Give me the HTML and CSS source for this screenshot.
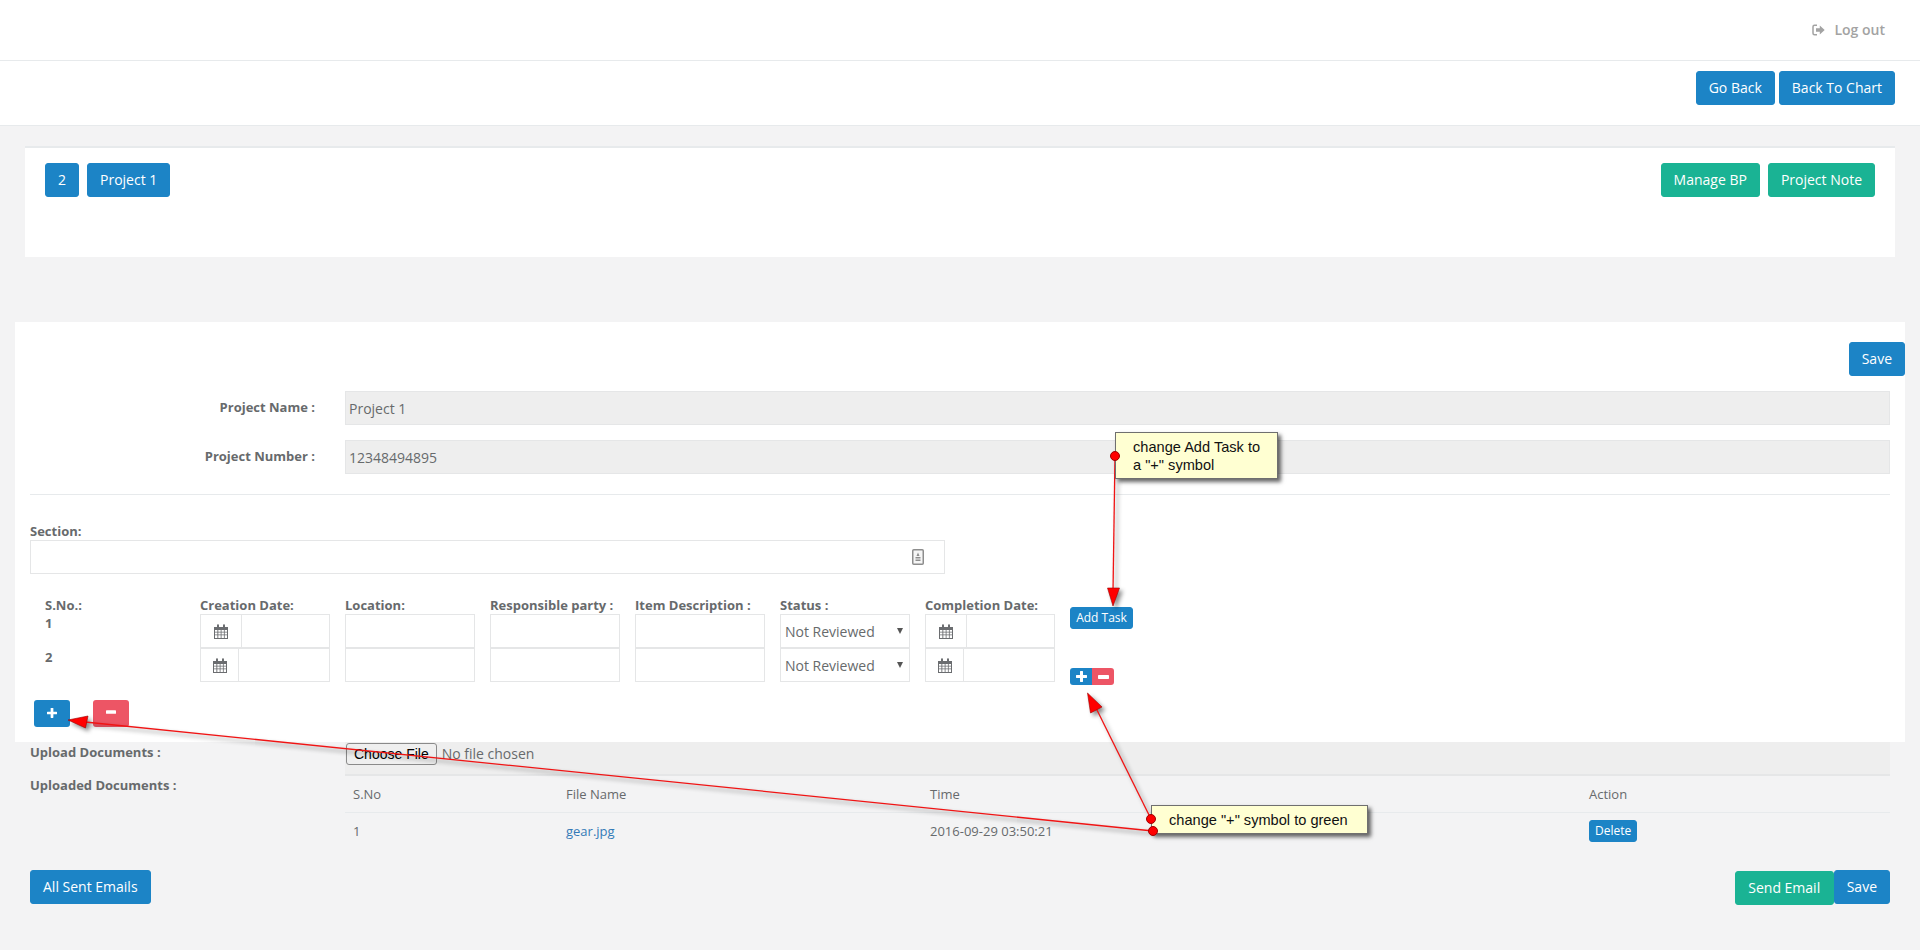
FILE: index.html
```html
<!DOCTYPE html>
<html lang="en">
<head>
<meta charset="utf-8">
<title>Project 1</title>
<link rel="stylesheet" href="styles.css">
</head>
<body>
<svg class="defs" width="0" height="0" aria-hidden="true">
  <symbol id="cal" viewBox="0 0 14 15">
    <path fill="#6b6d70" d="M0 3h3V1.500C3 .7 3.500 .3 4 .3s1 .4 1 1.200V3h4V1.500C9 .7 9.500 .3 10 .3s1 .4 1 1.200V3h3v12H0z"/>
    <path fill="#fff" d="M1 6h2.400v1.800H1zM4.300 6h2.400v1.800H4.300zM7.500 6h2.400v1.800H7.500zM10.700 6H13v1.800h-2.300zM1 8.600h2.400v1.800H1zM4.300 8.600h2.400v1.800H4.300zM7.500 8.600h2.400v1.800H7.500zM10.700 8.600H13v1.800h-2.300zM1 11.200h2.400V14H1zM4.300 11.200h2.400V14H4.300zM7.500 11.200h2.400V14H7.500zM10.700 11.200H13V14h-2.300z"/>
  </symbol>
  <symbol id="plus" viewBox="0 0 11 11"><path fill="#fff" d="M4 .5C4 .2 4.200 0 4.500 0h2c.3 0 .5.200.5.500V4h3.500c.3 0 .5.200.5.500v2c0 .3-.2.500-.5.500H7v3.500c0 .3-.2.500-.5.500h-2c-.3 0-.5-.2-.5-.5V7H.5C.2 7 0 6.800 0 6.500v-2C0 4.200.2 4 .5 4H4z"/></symbol>
  <symbol id="minus" viewBox="0 0 11 4"><rect width="11" height="4" rx=".7" fill="#fff"/></symbol>
</svg>

<header class="topbar">
  <a class="logout">
    <svg class="logout-icon" viewBox="0 0 13 12"><path d="M5 1.200H2.500C1.500 1.200 1 1.800 1 2.700v6.600c0 .9.500 1.500 1.500 1.500H5" stroke="#a3a3a3" stroke-width="1.500" fill="none"/><path fill="#a3a3a3" d="M4 4.300h3.800V1.500L12.700 6l-4.900 4.500V7.700H4z"/></svg>
    <span>Log out</span>
  </a>
</header>

<nav class="actionbar">
  <button class="btn blue">Go Back</button>
  <button class="btn blue">Back To Chart</button>
</nav>

<section class="summary">
  <div class="btn-row">
    <button class="btn blue">2</button>
    <button class="btn blue">Project 1</button>
  </div>
  <div class="btn-row">
    <button class="btn green">Manage BP</button>
    <button class="btn green">Project Note</button>
  </div>
</section>

<main class="sheet">
  <div class="panel">
    <div class="save-line"><button class="btn blue">Save</button></div>

    <div class="field">
      <label class="field-label">Project Name :</label>
      <input class="input readonly" value="Project 1" disabled>
    </div>
    <div class="field">
      <label class="field-label">Project Number :</label>
      <input class="input readonly" value="12348494895" disabled>
    </div>

    <hr class="rule">

    <label class="plain-label">Section:</label>
    <div class="section-box">
      <svg class="section-icon" viewBox="0 0 12 16"><rect x=".75" y=".75" width="10.500" height="14.500" rx="1" fill="#f6f6f6" stroke="#8d8d8d" stroke-width="1.500"/><path fill="#8d8d8d" d="M6 3.500 7.500 7h-3zM3.500 8h5v1.500h-5zM3.500 10.500h5V12h-5z"/></svg>
    </div>

    <div class="tasks">
      <div class="tlabel sno">S.No.:</div>
      <div class="tlabel">Creation Date:</div>
      <div class="tlabel">Location:</div>
      <div class="tlabel">Responsible party :</div>
      <div class="tlabel">Item Description :</div>
      <div class="tlabel">Status :</div>
      <div class="tlabel">Completion Date:</div>
      <div class="add-cell"><button class="btn blue xs">Add Task</button></div>

      <div class="tlabel sno num">1</div>
      <div class="date"><span class="addon wide"><svg class="cal"><use href="#cal"/></svg></span><input class="date-input"></div>
      <input class="cell">
      <input class="cell">
      <input class="cell">
      <div class="select-wrap"><select class="select"><option>Not Reviewed</option></select></div>
      <div class="date"><span class="addon wide"><svg class="cal"><use href="#cal"/></svg></span><input class="date-input"></div>

      <div class="tlabel sno num">2</div>
      <div class="date"><span class="addon"><svg class="cal"><use href="#cal"/></svg></span><input class="date-input"></div>
      <input class="cell">
      <input class="cell">
      <input class="cell">
      <div class="select-wrap"><select class="select"><option>Not Reviewed</option></select></div>
      <div class="date"><span class="addon"><svg class="cal"><use href="#cal"/></svg></span><input class="date-input"></div>
      <div class="mini-pair">
        <button class="mini blue"><svg class="mini-plus"><use href="#plus"/></svg></button>
        <button class="mini red"><svg class="mini-minus"><use href="#minus"/></svg></button>
      </div>
    </div>

    <div class="section-actions">
      <button class="square blue"><svg class="sq-plus"><use href="#plus"/></svg></button>
      <button class="square red"><svg class="sq-minus"><use href="#minus"/></svg></button>
    </div>
  </div>

  <div class="field upload">
    <label class="field-label left">Upload Documents :</label>
    <div class="file-box"><input class="file" type="file"></div>
  </div>

  <div class="field docs">
    <label class="field-label left">Uploaded Documents :</label>
    <table class="doc-table">
      <thead>
        <tr><th class="c1">S.No</th><th class="c2">File Name</th><th class="c3">Time</th><th>Action</th></tr>
      </thead>
      <tbody>
        <tr><td>1</td><td><a class="link">gear.jpg</a></td><td>2016-09-29 03:50:21</td><td><button class="btn blue xs">Delete</button></td></tr>
      </tbody>
    </table>
  </div>

  <div class="footer-actions">
    <button class="btn blue">All Sent Emails</button>
    <div class="footer-right">
      <button class="btn green low">Send Email</button>
      <button class="btn blue">Save</button>
    </div>
  </div>
</main>

<svg class="arrows" width="1920" height="950" viewBox="0 0 1920 950" aria-hidden="true">
  <g class="arrow">
    <path class="shaft" d="M1115 456 1113 592"/>
    <path class="head" d="M1113 606 1107.500 588 1119.500 588z"/>
    <path class="shaft" d="M1151 819 1096 708"/>
    <path class="head" d="M1087.500 693 1102 707 1090.500 713z"/>
    <path class="shaft" d="M1153 831 85 722"/>
    <path class="head" d="M68 720 88 716 85.500 728z"/>
  </g>
</svg>
<div class="note note-one">change Add Task to<br>a "+" symbol</div>
<div class="note note-two">change "+" symbol to green</div>
<svg class="arrows dots" width="1920" height="950" viewBox="0 0 1920 950" aria-hidden="true">
  <circle class="dot" cx="1115" cy="456" r="4.500"/>
  <circle class="dot" cx="1151" cy="819" r="4.500"/>
  <circle class="dot" cx="1153" cy="831" r="4.500"/>
</svg>
</body>
</html>
```

FILE: styles.css
```css
* { box-sizing: border-box; }
html, body { margin: 0; height: 950px; overflow: hidden; }
body {
  position: relative;
  background: #f3f3f4;
  color: #676a6c;
  font: 13px/20px "Open Sans", "Liberation Sans", sans-serif;
}
.defs { position: absolute; }

.topbar {
  height: 61px;
  background: #fff;
  border-bottom: 1px solid #e7eaec;
  display: flex;
  justify-content: flex-end;
  align-items: center;
  padding-right: 35px;
}
.logout { display: flex; align-items: center; color: #a3a3a3; font-weight: 600; font-size: 14px; }
.logout-icon { width: 13px; height: 12px; margin-right: 9px; }

.actionbar {
  height: 65px;
  background: #fff;
  border-bottom: 1px solid #e7eaec;
  display: flex;
  justify-content: flex-end;
  align-items: flex-start;
  gap: 4px;
  padding: 10px 25px 0 0;
}

.btn {
  height: 34px;
  padding: 0 12px;
  border: 1px solid transparent;
  border-radius: 3px;
  color: #fff;
  font: 14px/20px "Open Sans", "Liberation Sans", sans-serif;
  cursor: pointer;
}
.blue { background: #1c84c6; border-color: #1c84c6; }
.green { background: #1ab394; border-color: #1ab394; }
.red { background: #ed5565; border-color: #ed5565; }
.btn.xs { height: 22px; padding: 0 5px; font-size: 12px; line-height: 18px; }

.summary {
  margin: 20px 25px 0;
  height: 111px;
  background: #fff;
  border-top: 2px solid #e7eaec;
  padding: 15px 20px;
  display: flex;
  justify-content: space-between;
  align-items: flex-start;
}
.btn-row { display: flex; gap: 8px; }

.sheet { margin: 65px 15px 0; }
.panel { height: 420px; background: #fff; padding: 20px 15px 0 15px; }
.save-line { display: flex; justify-content: flex-end; margin-right: -15px; margin-bottom: 15px; }

.field { display: grid; grid-template-columns: 285px 1fr; column-gap: 30px; margin-bottom: 15px; }
.field-label {
  text-align: right;
  font-size: 13px;
  font-weight: 700;
  line-height: 18px;
  padding-top: 7px;
}
.field-label.left { text-align: left; padding-top: 1px; }
.input {
  height: 34px;
  width: 100%;
  border: 1px solid #e5e6e7;
  padding: 0 3px;
  font: 14px "Open Sans", "Liberation Sans", sans-serif;
  color: #676a6c;
}
.readonly { background: #eee; opacity: 1; }

.rule { height: 1px; border: 0; background: #e7eaec; margin: 20px 0 27px; }

.plain-label { display: block; font-size: 13px; font-weight: 700; line-height: 18px; height: 18px; }
.section-box {
  width: 915px;
  height: 34px;
  background: #fff;
  border: 1px solid #e5e6e7;
  display: flex;
  align-items: center;
  justify-content: flex-end;
  padding-right: 20px;
}
.section-icon { width: 12px; height: 16px; }

.tasks {
  margin: 24px 0 0 15px;
  display: grid;
  grid-template-columns: 140px repeat(6, 130px) 64px;
  grid-template-rows: 16px 34px 34px;
  column-gap: 15px;
}
.tlabel { font-size: 13px; font-weight: 700; line-height: 16px; white-space: nowrap; margin-top: -1px; }
.num { padding-top: 2px; }
.add-cell { grid-column: 8; grid-row: 1 / 3; padding-top: 9px; }
.add-cell .btn { width: 63px; white-space: nowrap; }

.date { display: flex; height: 34px; border: 1px solid #e5e6e7; background: #fff; }
.addon { width: 38px; flex: none; display: flex; align-items: center; justify-content: center; border-right: 1px solid #e5e6e7; }
.addon.wide { width: 41px; }
.cal { width: 14px; height: 15px; }
.date-input { flex: 1; min-width: 0; border: 0; background: transparent; }
.cell { width: 130px; height: 34px; border: 1px solid #e5e6e7; background: #fff; }

.select-wrap { position: relative; }
.select-wrap::after {
  content: "";
  position: absolute;
  right: 7px;
  top: 14px;
  border: 3.500px solid transparent;
  border-top: 6px solid #555;
  border-bottom: 0;
}
.select {
  appearance: none;
  width: 130px;
  height: 34px;
  border: 1px solid #e5e6e7;
  background: #fff;
  padding: 0 4px;
  color: #676a6c;
  font: 14px "Open Sans", "Liberation Sans", sans-serif;
}

.mini-pair { grid-column: 8; display: flex; align-items: flex-start; padding-top: 20px; }
.mini { width: 22px; height: 17px; padding: 0; border: 0; display: flex; align-items: center; justify-content: center; }
.blue.mini { border-radius: 3px 0 0 3px; }
.red.mini { border-radius: 0 3px 3px 0; }
.mini-plus { width: 11px; height: 11px; }
.mini-minus { width: 11px; height: 4px; }

.section-actions { display: flex; gap: 23px; margin: 18px 0 0 4px; }
.square { width: 36px; height: 27px; padding: 0; border: 0; border-radius: 3px; display: flex; align-items: center; justify-content: center; }
.sq-plus { width: 10px; height: 10px; margin-bottom: 1px; }
.sq-minus { width: 10px; height: 4px; margin-bottom: 3px; }

.upload { padding: 0 15px; margin-bottom: 0; height: 34px; }
.file-box { background: #eee; border-bottom: 2px solid #e5e6e7; height: 34px; padding: 1px 0 0 1px; }
.file { font: 14px/20px "Open Sans", "Liberation Sans", sans-serif; color: #676a6c; }
.file::file-selector-button {
  font: 14px "Liberation Sans", sans-serif;
  height: 22px;
  margin-right: 5px;
  padding: 0 7px;
  background: #efefef;
  border: 1px solid #8a8a8a;
  border-radius: 3px;
  color: #000;
}

.docs { padding: 0 15px; margin: 0; height: 94px; }
.docs .field-label { padding-top: 0; }
.doc-table { width: 100%; border-collapse: collapse; table-layout: fixed; align-self: start; font-size: 13px; }
.doc-table th { font-weight: 400; text-align: left; height: 36px; padding: 1px 8px 0; border-bottom: 1px solid #e7eaec; }
.doc-table td { height: 38px; padding: 0 8px; vertical-align: middle; }
.c1 { width: 213px; }
.c2 { width: 364px; }
.c3 { width: 659px; }
.link { color: #337ab7; }

.footer-actions { display: flex; justify-content: space-between; align-items: flex-start; padding: 0 15px; }
.footer-right { display: flex; }
.low { margin-top: 1px; padding: 0 12.500px; }

.arrows { position: absolute; left: 0; top: 0; pointer-events: none; }
.arrow { filter: drop-shadow(3px 3px 2px rgba(0, 0, 0, .45)); }
.shaft { stroke: #f01414; stroke-width: 1.300; fill: none; }
.head { fill: #f00; stroke: #9a0000; stroke-width: .6; }
.dot { fill: #f00; stroke: #a00000; stroke-width: 1; }

.note {
  position: absolute;
  background: #ffffd2;
  border: 1px solid #6f6f6f;
  box-shadow: 3px 3px 4px rgba(0, 0, 0, .6);
  color: #111;
  font: 14.600px/18px "Liberation Sans", Arial, sans-serif;
  white-space: nowrap;
}
.note-one { left: 1115px; top: 432px; width: 163px; height: 47px; padding: 5px 0 0 17px; }
.note-two { left: 1151px; top: 805px; width: 217px; height: 29px; padding: 5px 0 0 17px; }
```
